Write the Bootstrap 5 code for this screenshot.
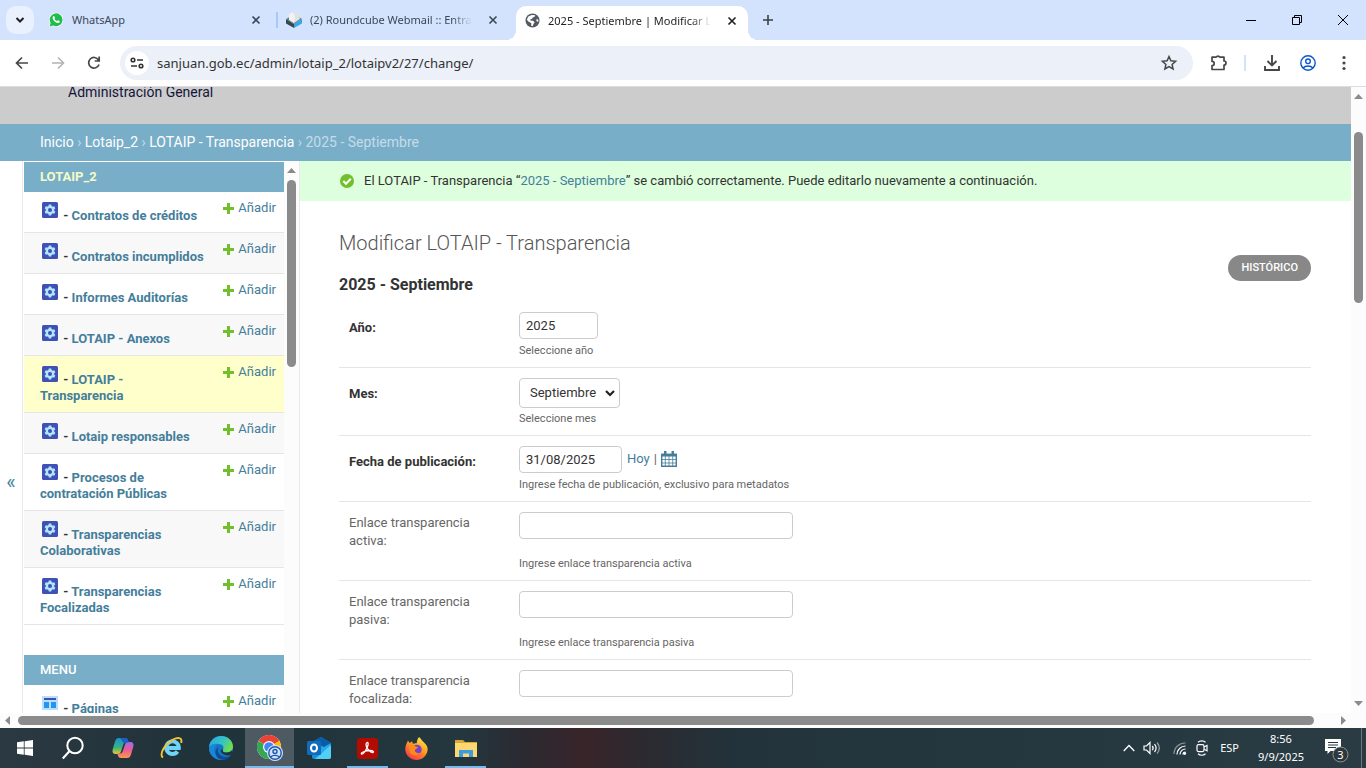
<!DOCTYPE html>
<html lang="es">
<head>
<meta charset="utf-8">
<meta name="viewport" content="width=device-width, initial-scale=1">
<title>2025 - Septiembre | Modificar LOTAIP</title>
<link href="https://cdn.jsdelivr.net/npm/bootstrap@5.3.0/dist/css/bootstrap.min.css" rel="stylesheet">
<style>
:root { --blue: #79aec8; --linkc: #447e9b; --thumb: #8b8b8b; --ui: "Noto Sans", "Open Sans", sans-serif; }
body { font-family: Roboto, "Liberation Sans", sans-serif; font-size: 13px; line-height: 16px; color: #333; background: #fff; }
svg { display: block; flex: none; }
button { border: 0; background: none; padding: 0; color: inherit; }
a { color: var(--linkc); text-decoration: none; }

/* browser tabs */
.tabstrip { height: 40px; padding: 6px 0 0 6px; background: #d3e3fd; font-family: var(--ui); font-size: 11px; line-height: 20px; color: #3c4756; }
.tab-search { width: 28px; height: 28px; border-radius: 10px; background: #e9f0fe; }
.tab-item { height: 28px; }
.tab-one { width: 242px; padding: 0 15px 0 14px; }
.tab-two { width: 230px; padding: 0 8px 0 10px; }
.tab-sep { width: 2px; height: 16px; margin: 6px -2px 0 0; background: #a8c7fa; }
.tab-title { overflow: hidden; white-space: nowrap; margin-left: 8px; }
.tab-fade { -webkit-mask-image: linear-gradient(90deg, #000 calc(100% - 20px), transparent); mask-image: linear-gradient(90deg, #000 calc(100% - 20px), transparent); }
.tab-active { position: relative; width: 232px; height: 34px; padding: 0 11px 5px 9px; background: #fff; border-radius: 10px 10px 0 0; color: #1f1f1f; margin-left: 10px; }
.tab-active::before, .tab-active::after { content: ""; position: absolute; bottom: 0; width: 10px; height: 10px; }
.tab-active::before { left: -10px; background: radial-gradient(circle at 0 0, transparent 10px, #fff 10px); }
.tab-active::after { right: -10px; background: radial-gradient(circle at 100% 0, transparent 10px, #fff 10px); }
.tab-new { margin: 8px 0 0 14px; }
.win-btn { width: 46px; height: 28px; color: #000; }

/* address bar */
.addressbar { height: 47px; padding: 0 13px 0 13px; background: #fff; border-bottom: 1px solid #ddd; color: #474747; }
.nav-btn { width: 18px; height: 18px; margin-right: 18px; }
.url-pill { height: 34px; border-radius: 17px; background: #ebf0f9; padding: 0 15px 0 5px; margin-left: -1px; }
.site-info { width: 24px; height: 24px; border-radius: 50%; background: #fff; color: #333; }
.url-text { border: 0; background: none; padding: 0; margin-left: 8px; height: 26px; line-height: 24px; font-family: var(--ui); font-size: 13px; color: #333; min-width: 0; outline: 0; }
.tool-set { margin-left: 17px; }
.tool-sep { margin: 0 17px 0 16px; }
.tool-user { margin: 0 19px; }

/* scrollbars */
.scroll-v { width: 15px; background: #fcfcfc; padding: 7px 0; }
.scroll-h { height: 15px; background: #fcfcfc; padding: 0 20px 0 5px; }
.thumb { background: var(--thumb); border-radius: 5px; flex: none; }
.thumb-page { width: 9px; height: 171px; margin-top: 33px; }
.thumb-side { width: 9px; height: 187px; margin-top: 7px; }
.thumb-h { height: 9px; margin: 0 27px 0 8px; }

/* site header */
.brand-bar { height: 37px; background: #ccc; padding: 0 40px 0 68px; color: #14143c; font-size: 14px; line-height: 10px; overflow: hidden; }
.crumbs { height: 37px; background: var(--blue); padding: 0 40px 2px; font-size: 14px; color: #c4dce8; }
.crumbs a { color: #fff; }

/* sidebar */
.side-toggle { width: 23px; border-right: 1px solid #eaeaea; color: var(--linkc); font-size: 20px; padding-top: 90px; }
.side-list { width: 261px; padding: 1px 0 0 1px; }
.side-table { margin: 0 0 30px; --bs-table-bg: transparent; }
.side-table caption { caption-side: top; background: var(--blue); padding: 7px 16px; font-size: 13px; line-height: 16px; font-weight: 500; color: #fff; }
.side-table .cap-current { font-weight: 700; color: #f5fbc8; }
.side-table th, .side-table td { padding: 8px; border-bottom: 1px solid #e5e5e5; line-height: 16px; vertical-align: top; color: #333; font-weight: 700; }
.side-table th { padding-left: 16px; }
.side-table td { width: 69px; font-weight: 400; white-space: nowrap; }
.side-table tr:nth-child(even) { background: #f8f8f8; }
.side-table tr.row-current { background: #ffc; }
.side-table th svg { display: inline-block; vertical-align: baseline; }
.side-edge { border-right: 1px solid #eaeaea; }

/* content */
.msg { min-height: 40px; background: #dfd; padding: 0 40px; }
.msg-text { padding-left: 10px; }
.content-pad { padding: 30px 40px 0 39px; }
.page-title { font-size: 20px; line-height: 24px; font-weight: 300; color: #555; margin: 0 0 21px; }
.object-title { font-size: 16px; line-height: 18px; font-weight: 700; margin: 0 0 8px; }
.pill-btn { font-size: 11px; line-height: 26px; font-weight: 500; padding: 0 13px; border-radius: 15px; background: #888; color: #fff; text-transform: uppercase; margin-top: 24px; }
.form-line { padding: 10px; border-bottom: 1px solid #e5e5e5; }
.form-line label { width: 170px; padding: 2px 30px 0 0; line-height: 18px; color: #666; }
.form-line label.required { font-weight: 700; color: #333; padding-top: 7px; }
.form-line .form-control { border: 1px solid #ccc; border-radius: 4px; font-size: 13px; line-height: 15px; color: #333; padding: 5px 6px; height: 27px; margin-bottom: 1px; }
.form-line .form-select { border: 1px solid #ccc; border-radius: 4px; font-size: 13px; line-height: 18px; color: #333; width: 101px; height: 30px; padding: 5px 20px 5px 10px; background-position: right 3px center; background-size: 12px;
  background-image: url("data:image/svg+xml,%3Csvg xmlns='http://www.w3.org/2000/svg' viewBox='0 0 12 12'%3E%3Cpath d='M2 4l4 4 4-4' fill='none' stroke='%23222' stroke-width='2.2'/%3E%3C/svg%3E"); }
.form-line .in-year { width: 79px; }
.form-line .in-date { width: 103px; }
.form-line .in-url { width: 274px; margin-bottom: 14px; }
.date-links { padding: 0 0 3px 5px; color: #666; }
.help-note { font-size: 11px; line-height: 13px; padding-top: 4px; color: #666; }

/* taskbar */
.taskbar { height: 40px; background: linear-gradient(90deg, #2b3942 0, #20323a 14%, #24363e 34%, #2b2b32 38%, #382429 43%, #2c2a30 47%, #22333b 54%, #253840 80%, #2a3b43 100%); color: #fff; font-family: var(--ui); font-size: 11px; }
.task-btn { width: 49px; height: 40px; }
.task-on { border-bottom: 2px solid #76b9ed; padding-top: 2px; margin: 0 4px; width: 41px; }
.task-focus { background: #4d5a61; margin: 0; width: 49px; }
.tray-cam { margin: 0 11px 0 8px; }
.tray-clock { width: 68px; text-align: center; line-height: 18px; }
.show-desktop { width: 5px; height: 40px; border-left: 1px solid #6b777d; }
</style>
</head>
<body>
<svg width="0" height="0" class="position-absolute" aria-hidden="true">
  <symbol id="x" viewBox="0 0 10 10"><path d="M1.5 1.5l7 7M8.500 1.500l-7 7" stroke="currentColor" stroke-width="1.6"/></symbol>
  <symbol id="gear" viewBox="0 0 20 20">
    <rect x="2" y="2" width="16" height="16" rx="1.500" fill="#3f51b5"/>
    <g fill="#b3e5fc"><circle cx="10" cy="10" r="4.200"/>
    <path d="M8.800 4.500h2.400l.4 2H8.400zM8.800 15.500h2.400l.4-2H8.400z"/>
    <path d="M8.800 4.500h2.400l.4 2H8.400zM8.800 15.500h2.400l.4-2H8.400z" transform="rotate(60 10 10)"/>
    <path d="M8.800 4.500h2.400l.4 2H8.400zM8.800 15.500h2.400l.4-2H8.400z" transform="rotate(120 10 10)"/></g>
    <circle cx="10" cy="10" r="2" fill="#3f51b5"/>
  </symbol>
  <symbol id="plus" viewBox="0 0 11 11"><path d="M5.500 0v11M0 5.500h11" stroke="#70bf2b" stroke-width="3"/></symbol>
  <symbol id="up" viewBox="0 0 9 5"><path d="M0 5L4.500 0 9 5z" fill="#8b8b8b"/></symbol>
</svg>

<div class="d-flex flex-column vh-100 overflow-hidden">

  <header class="flex-shrink-0">
    <div class="tabstrip d-flex align-items-start">
      <button class="tab-search d-flex align-items-center justify-content-center" aria-label="Buscar pestañas"><svg width="10" height="10" viewBox="0 0 10 10"><path d="M1.500 3L5 6.500 8.500 3" fill="none" stroke="#1f1f1f" stroke-width="2"/></svg></button>
      <div class="tab-item tab-one d-flex align-items-center">
        <svg width="16" height="16" viewBox="0 0 16 16"><path d="M1 15l1-3.800A7 7 0 1 1 4.800 14z" fill="#fff"/><path d="M1.700 14.400l.9-3.400a6.400 6.400 0 1 1 2.500 2.400z" fill="#1fbd4b"/><path d="M5.300 4.300c.6-.5 1-.3 1.200.2l.5 1.200c.1.400-.5.900-.5 1.200.5 1 1.300 1.700 2.400 2.200.4 0 .8-1 1.200-.9l1.500.8c.4.300 0 1.500-.7 1.800-1.600.8-4.800-1.200-5.900-3.400-.6-1.200-.4-2.500.3-3.100z" fill="#fff"/></svg>
        <span class="tab-title flex-grow-1">WhatsApp</span>
        <button aria-label="Cerrar"><svg width="10" height="10"><use href="#x"/></svg></button>
      </div>
      <div class="tab-sep"></div>
      <div class="tab-item tab-two d-flex align-items-center">
        <svg width="16" height="16" viewBox="0 0 16 16"><path d="M0 7l8 5v4L0 11.500z" fill="#37474f"/><path d="M16 7l-8 5v4l8-4.500z" fill="#35a8e8"/><path d="M0 7l8-4.500L16 7l-8 5z" fill="#607d8b"/><path d="M3 2.500L7 0l5 1.500 2 5.500-6 4-5-3.200z" fill="#dfe3e5"/><path d="M3 2.500L7 0l2 5-1 6-5-3.200z" fill="#f2f2ee"/></svg>
        <span class="tab-title tab-fade flex-grow-1">(2) Roundcube Webmail :: Entrada</span>
        <button class="ms-3" aria-label="Cerrar"><svg width="10" height="10"><use href="#x"/></svg></button>
      </div>
      <div class="tab-active d-flex align-items-center">
        <svg width="15" height="15" viewBox="0 0 16 16"><circle cx="8" cy="8" r="7.500" fill="#555a60"/><path d="M7 2.200l4 .2-1 1.800-2 .6-.4 1.600H6L5.500 8l3 .3 1.800 1.500-1.200 1.700-1 2.500-1.600-.8.3-2.300L3.600 9 2 7.200 3.300 4zM12.500 6l1.800 1.500-.3 2-1.900-1z" fill="#fff"/></svg>
        <span class="tab-title tab-fade flex-grow-1">2025 - Septiembre | Modificar LOTAIP</span>
        <button class="ms-3" aria-label="Cerrar"><svg width="10" height="10"><use href="#x"/></svg></button>
      </div>
      <button class="tab-new" aria-label="Nueva pestaña"><svg width="12" height="12" viewBox="0 0 12 12"><path d="M6 1v10M1 6h10" stroke="#3c4043" stroke-width="1.600"/></svg></button>
      <div class="d-flex ms-auto">
        <button class="win-btn d-flex align-items-center justify-content-center" aria-label="Minimizar"><svg width="10" height="10"><path d="M0 5.500h10" stroke="#000"/></svg></button>
        <button class="win-btn d-flex align-items-center justify-content-center" aria-label="Restaurar"><svg width="10" height="10"><path d="M.5 2.500h7v7h-7zM2.500 2.500v-2h7v7h-2" fill="none" stroke="#000"/></svg></button>
        <button class="win-btn d-flex align-items-center justify-content-center" aria-label="Cerrar ventana"><svg width="10" height="10"><path d="M0 0l10 10M10 0L0 10" stroke="#000"/></svg></button>
      </div>
    </div>

    <div class="addressbar d-flex align-items-center">
      <button class="nav-btn" aria-label="Atrás"><svg width="18" height="18" viewBox="0 0 18 18"><path d="M15 9H4M9 3.500L3.500 9 9 14.500" fill="none" stroke="#474747" stroke-width="1.700"/></svg></button>
      <button class="nav-btn" aria-label="Adelante"><svg width="18" height="18" viewBox="0 0 18 18"><path d="M3 9h11M9 3.500l5.500 5.500L9 14.500" fill="none" stroke="#b4b4b4" stroke-width="1.600"/></svg></button>
      <button class="nav-btn" aria-label="Recargar"><svg width="18" height="18" viewBox="0 0 18 18"><path d="M14 10.500A5.300 5.300 0 1 1 13.500 6M14.200 2.500V7H9.700" fill="none" stroke="#474747" stroke-width="1.700"/></svg></button>
      <div class="url-pill d-flex align-items-center flex-grow-1">
        <button class="site-info d-flex align-items-center justify-content-center" aria-label="Información del sitio"><svg width="14" height="12" viewBox="0 0 14 12"><g fill="none" stroke="#333" stroke-width="1.600"><circle cx="3" cy="3" r="1.800"/><path d="M7 3h6M1 9h6"/><circle cx="11" cy="9" r="1.800"/></g></svg></button>
        <input class="url-text flex-grow-1" aria-label="Dirección" value="sanjuan.gob.ec/admin/lotaip_2/lotaipv2/27/change/">
        <button aria-label="Marcador"><svg width="18" height="18" viewBox="0 0 18 18"><path d="M9 2.500l1.900 4.300 4.700.5-3.500 3.100 1 4.600L9 12.600 4.900 15l1-4.600-3.500-3.100 4.700-.5z" fill="none" stroke="#474747" stroke-width="1.500"/></svg></button>
      </div>
      <div class="tool-set d-flex align-items-center">
        <button aria-label="Extensiones"><svg width="18" height="18" viewBox="0 0 18 18"><path d="M2 3.200h4.200a2 2 0 0 1 3.600 0H14V7a2 2 0 0 1 0 4v4.500H2V11.700a2.200 2.200 0 0 0 0-4.400z" fill="none" stroke="#474747" stroke-width="1.700" stroke-linejoin="round"/></svg></button>
        <svg class="tool-sep" width="2" height="16"><path d="M1 0v16" stroke="#d3e3fd" stroke-width="2"/></svg>
        <button aria-label="Descargas"><svg width="18" height="18" viewBox="0 0 18 18"><path d="M9 1v10M4.500 7L9 11.500 13.500 7M2 12v4h14v-4" fill="none" stroke="#474747" stroke-width="1.900"/></svg></button>
        <button class="tool-user" aria-label="Perfil"><svg width="16" height="16" viewBox="0 0 16 16"><g fill="none" stroke="#0b57d0" stroke-width="1.400"><circle cx="8" cy="8" r="7.200"/><circle cx="8" cy="6.300" r="2.300"/><path d="M3 13c2.500-2.600 7.500-2.600 10 0"/></g></svg></button>
        <button aria-label="Menú"><svg width="18" height="18" viewBox="0 0 18 18"><g fill="#474747"><circle cx="9" cy="3.500" r="1.600"/><circle cx="9" cy="9" r="1.600"/><circle cx="9" cy="14.500" r="1.600"/></g></svg></button>
      </div>
    </div>
  </header>

  <div class="d-flex flex-grow-1 overflow-hidden">
    <div class="d-flex flex-column flex-grow-1 overflow-hidden">
      <div class="brand-bar flex-shrink-0">Administración General</div>
      <nav class="crumbs d-flex align-items-center flex-shrink-0" aria-label="Ruta">
        <div><a href="#">Inicio</a> › <a href="#">Lotaip_2</a> › <a href="#">LOTAIP - Transparencia</a> › 2025 - Septiembre</div>
      </nav>

      <div class="d-flex flex-grow-1 overflow-hidden">
        <button class="side-toggle d-flex align-items-center justify-content-center flex-shrink-0" aria-label="Alternar navegación">«</button>
        <nav class="side-list flex-shrink-0 overflow-hidden" aria-label="Barra lateral">
          <table class="table side-table">
            <caption class="cap-current">LOTAIP_2</caption>
            <tbody>
            <tr><th scope="row"><svg width="20" height="20"><use href="#gear"/></svg> - <a href="#">Contratos de créditos</a></th><td><a href="#" class="d-flex align-items-center justify-content-between"><svg width="11" height="11"><use href="#plus"/></svg>Añadir</a></td></tr>
            <tr><th scope="row"><svg width="20" height="20"><use href="#gear"/></svg> - <a href="#">Contratos incumplidos</a></th><td><a href="#" class="d-flex align-items-center justify-content-between"><svg width="11" height="11"><use href="#plus"/></svg>Añadir</a></td></tr>
            <tr><th scope="row"><svg width="20" height="20"><use href="#gear"/></svg> - <a href="#">Informes Auditorías</a></th><td><a href="#" class="d-flex align-items-center justify-content-between"><svg width="11" height="11"><use href="#plus"/></svg>Añadir</a></td></tr>
            <tr><th scope="row"><svg width="20" height="20"><use href="#gear"/></svg> - <a href="#">LOTAIP - Anexos</a></th><td><a href="#" class="d-flex align-items-center justify-content-between"><svg width="11" height="11"><use href="#plus"/></svg>Añadir</a></td></tr>
            <tr class="row-current"><th scope="row"><svg width="20" height="20"><use href="#gear"/></svg> - <a href="#">LOTAIP - Transparencia</a></th><td><a href="#" class="d-flex align-items-center justify-content-between"><svg width="11" height="11"><use href="#plus"/></svg>Añadir</a></td></tr>
            <tr><th scope="row"><svg width="20" height="20"><use href="#gear"/></svg> - <a href="#">Lotaip responsables</a></th><td><a href="#" class="d-flex align-items-center justify-content-between"><svg width="11" height="11"><use href="#plus"/></svg>Añadir</a></td></tr>
            <tr><th scope="row"><svg width="20" height="20"><use href="#gear"/></svg> - <a href="#">Procesos de contratación Públicas</a></th><td><a href="#" class="d-flex align-items-center justify-content-between"><svg width="11" height="11"><use href="#plus"/></svg>Añadir</a></td></tr>
            <tr><th scope="row"><svg width="20" height="20"><use href="#gear"/></svg> - <a href="#">Transparencias Colaborativas</a></th><td><a href="#" class="d-flex align-items-center justify-content-between"><svg width="11" height="11"><use href="#plus"/></svg>Añadir</a></td></tr>
            <tr><th scope="row"><svg width="20" height="20"><use href="#gear"/></svg> - <a href="#">Transparencias Focalizadas</a></th><td><a href="#" class="d-flex align-items-center justify-content-between"><svg width="11" height="11"><use href="#plus"/></svg>Añadir</a></td></tr>
            </tbody>
          </table>
          <table class="table side-table">
            <caption>MENU</caption>
            <tbody>
            <tr><th scope="row"><svg width="20" height="20" viewBox="0 0 20 20"><path d="M2 3h16v14H2z" fill="#bbdefb"/><path d="M4 5h12v2H4z" fill="#3f51b5"/><path d="M4 9h5v6H4zM11 9h5v6h-5z" fill="#2196f3"/></svg> - <a href="#">Páginas</a></th><td><a href="#" class="d-flex align-items-center justify-content-between"><svg width="11" height="11"><use href="#plus"/></svg>Añadir</a></td></tr>
            </tbody>
          </table>
        </nav>
        <div class="side-edge d-flex flex-shrink-0">
          <div class="scroll-v d-flex flex-column align-items-center">
            <svg width="9" height="5"><use href="#up"/></svg>
            <div class="thumb thumb-side"></div>
          </div>
        </div>

        <main class="flex-grow-1 overflow-hidden">
          <div class="msg d-flex align-items-center">
            <svg width="14" height="14" viewBox="0 0 14 14"><circle cx="7" cy="7" r="7" fill="#70bf2b"/><path d="M3.300 7l2.700 2.800 4.800-5" fill="none" stroke="#fff" stroke-width="2"/></svg>
            <span class="msg-text">El LOTAIP - Transparencia “<a href="#">2025 - Septiembre</a>” se cambió correctamente. Puede editarlo nuevamente a continuación.</span>
          </div>
          <div class="content-pad">
            <div class="d-flex justify-content-between align-items-start">
              <div>
                <h1 class="page-title">Modificar LOTAIP - Transparencia</h1>
                <h2 class="object-title">2025 - Septiembre</h2>
              </div>
              <a href="#" class="pill-btn">Histórico</a>
            </div>
            <form>
              <div class="form-line d-flex">
                <label for="f-year" class="required">Año:</label>
                <div>
                  <input id="f-year" class="form-control in-year" value="2025">
                  <div class="help-note">Seleccione año</div>
                </div>
              </div>
              <div class="form-line d-flex">
                <label for="f-month" class="required">Mes:</label>
                <div>
                  <select id="f-month" class="form-select"><option>Septiembre</option></select>
                  <div class="help-note">Seleccione mes</div>
                </div>
              </div>
              <div class="form-line d-flex">
                <label for="f-date" class="required">Fecha de publicación:</label>
                <div>
                  <div class="d-flex align-items-center">
                    <input id="f-date" class="form-control in-date" value="31/08/2025">
                    <span class="date-links d-flex align-items-center gap-1"><a href="#">Hoy</a><span>|</span>
                    <a href="#" aria-label="Calendario"><svg width="16" height="16" viewBox="0 0 16 16"><path d="M.7 3.500h14.600v11.800H.7z" fill="#fff" stroke="#447e9b" stroke-width="1.400"/><path d="M0 2.800h16v2.700H0zM3 0h2.500v4H3zM10.500 0H13v4h-2.500z" fill="#447e9b"/><path d="M4.300 5v10M8 5v10M11.700 5v10M1 8.500h14M1 12h14" stroke="#447e9b" stroke-width=".8"/></svg></a></span>
                  </div>
                  <div class="help-note">Ingrese fecha de publicación, exclusivo para metadatos</div>
                </div>
              </div>
              <div class="form-line d-flex">
                <label for="f-act">Enlace transparencia activa:</label>
                <div>
                  <input id="f-act" type="url" class="form-control in-url">
                  <div class="help-note">Ingrese enlace transparencia activa</div>
                </div>
              </div>
              <div class="form-line d-flex">
                <label for="f-pas">Enlace transparencia pasiva:</label>
                <div>
                  <input id="f-pas" type="url" class="form-control in-url">
                  <div class="help-note">Ingrese enlace transparencia pasiva</div>
                </div>
              </div>
              <div class="form-line d-flex">
                <label for="f-foc">Enlace transparencia focalizada:</label>
                <div><input id="f-foc" type="url" class="form-control in-url"></div>
              </div>
            </form>
          </div>
        </main>
      </div>
    </div>
    <div class="scroll-v d-flex flex-column align-items-center flex-shrink-0">
      <svg width="9" height="5"><use href="#up"/></svg>
      <div class="thumb thumb-page"></div>
      <svg class="mt-auto" width="9" height="5"><path d="M0 0h9L4.500 5z" fill="#8b8b8b"/></svg>
    </div>
  </div>

  <div class="scroll-h d-flex align-items-center flex-shrink-0">
    <svg width="5" height="9"><path d="M5 0v9L0 4.500z" fill="#8b8b8b"/></svg>
    <div class="thumb thumb-h flex-grow-1 flex-shrink-1"></div>
    <svg width="5" height="9"><path d="M0 0v9l5-4.500z" fill="#8b8b8b"/></svg>
  </div>

  <footer class="taskbar d-flex align-items-center flex-shrink-0">
    <button class="task-btn d-flex align-items-center justify-content-center" aria-label="Inicio"><svg width="16" height="16" viewBox="0 0 16 16"><path d="M0 2.300l6.800-1v6.300H0zM7.600 1.200L16 0v7.600H7.600zM0 8.400h6.800v6.300L0 13.700zM7.600 8.400H16V16l-8.400-1.200z" fill="#fff"/></svg></button>
    <button class="task-btn d-flex align-items-center justify-content-center" aria-label="Buscar"><svg width="24" height="24" viewBox="0 0 24 24"><circle cx="13" cy="9.500" r="7.700" fill="none" stroke="#fff" stroke-width="2"/><path d="M7.600 15L.8 22.500" stroke="#fff" stroke-width="2.200"/></svg></button>
    <button class="task-btn d-flex align-items-center justify-content-center" aria-label="Copilot"><svg width="22" height="22" viewBox="0 0 22 22"><defs><linearGradient id="cp1" x2="0" y2="1"><stop stop-color="#1594d8"/><stop offset=".6" stop-color="#39b47a"/><stop offset="1" stop-color="#e6c933"/></linearGradient><linearGradient id="cp2" x2="0" y2="1"><stop stop-color="#9c6cf0"/><stop offset=".5" stop-color="#ef5a94"/><stop offset="1" stop-color="#f99a4a"/></linearGradient></defs><path d="M13 1c2 0 2.700 1.200 3.200 3l.5 1.500h-2.500c-2 0-2.600 1-3.200 3L9 14.500c-.6 1.700-1.600 2.500-3.500 2.500H3.600C.8 17 0 14.800.8 12L3 4.500C3.700 2 5 1 7 1z" fill="url(#cp1)"/><path d="M9 21c-2 0-2.700-1.200-3.200-3L5.300 16.500h2.500c2 0 2.600-1 3.200-3L13 7.500C13.600 5.800 14.600 5 16.500 5h1.900C21.200 5 22 7.200 21.200 10L19 17.500C18.300 20 17 21 15 21z" fill="url(#cp2)"/><path d="M8 1h5c2 0 2.700 1.200 3.200 3l.5 1.500h-2.500c-1 0-1.700.3-2.200 1z" fill="#1d5fc4"/></svg></button>
    <button class="task-btn d-flex align-items-center justify-content-center" aria-label="Internet Explorer"><svg width="24" height="24" viewBox="0 0 24 24"><path d="M17.500 15.500A6.300 6.300 0 1 1 18.800 12H7" fill="none" stroke="#6fd3f7" stroke-width="4"/><path d="M3 21.500C-1.500 19 5 7.500 13 3.500c6-3 9.500-1.500 8.200 3.500" fill="none" stroke="#f5c431" stroke-width="1.900"/></svg></button>
    <button class="task-btn d-flex align-items-center justify-content-center" aria-label="Edge"><svg width="24" height="24" viewBox="0 0 24 24"><defs><linearGradient id="ed" x2="1" y2=".4"><stop stop-color="#2aa8e0"/><stop offset=".6" stop-color="#35c1c8"/><stop offset="1" stop-color="#6bdc54"/></linearGradient></defs><circle cx="12" cy="12" r="12" fill="#1276c8"/><path d="M0 11C.8 4.500 6 0 12 0c7 0 12 5 12 10.500 0 4-3 6-6.500 6-3 0-4.500-1.500-3.500-2.800C15.500 11 13.500 8 9.500 8 5 8 1 9.500 0 11z" fill="url(#ed)"/><path d="M9.500 8C5.500 9 4 13.500 6 17.500c2 3.500 6 6 9 6C9 25 1 21 0 13c0-4 5-6 9.500-5z" fill="#1b87d8"/><path d="M10 10.500c-2.500 3-1.500 8 4 10 3 1 6 .4 8.200-1.800-2 4-7 6-11.200 4.500-5-2-6.500-9.500-1-12.700z" fill="#0e4d92"/><path d="M14 13.700c-1 1.300.5 2.800 3.500 2.800 2 0 4-.7 5.300-2 1 1.500.6 3.500-.6 4.200-3 1.600-8.200.3-10.200-2.700-.6-2 .5-3.300 2-2.300z" fill="#22343c"/></svg></button>
    <button class="task-btn task-on task-focus d-flex align-items-center justify-content-center" aria-label="Chrome"><svg width="26" height="26" viewBox="0 0 26 26"><circle cx="12" cy="12" r="12" fill="#fff"/><path d="M12 12L1.600 6A12 12 0 0 1 22.400 6z" fill="#ea4335"/><path d="M12 12L22.400 6A12 12 0 0 1 12 24z" fill="#fbbc05"/><path d="M12 12v12A12 12 0 0 1 1.600 6z" fill="#34a853"/><circle cx="12" cy="12" r="6" fill="#fff"/><circle cx="12" cy="12" r="4.800" fill="#4285f4"/><circle cx="18" cy="18" r="8" fill="#d3e3fd"/><g fill="none" stroke="#1c55ad" stroke-width="1.400"><circle cx="18" cy="18" r="6.200"/><circle cx="18" cy="16.500" r="2"/><path d="M13.700 22c2-2.200 6.600-2.200 8.600 0"/></g></svg></button>
    <button class="task-btn d-flex align-items-center justify-content-center" aria-label="Outlook"><svg width="24" height="22" viewBox="0 0 24 22"><path d="M5 5L14 0l10 6v14a2 2 0 0 1-2 2H7a2 2 0 0 1-2-2z" fill="#1490df"/><path d="M8 3h10l5 4v5l-9 4-6-5z" fill="#28a8ea"/><path d="M5 5L14 0l10 6-7 4z" fill="#0a5ba8"/><path d="M24 8v12a2 2 0 0 1-2 2H8z" fill="#50d0f4"/><rect y="4" width="14" height="14" rx="1.500" fill="#0f6cbd"/><ellipse cx="7" cy="11" rx="3" ry="3.500" fill="none" stroke="#fff" stroke-width="2"/></svg></button>
    <button class="task-btn task-on d-flex align-items-center justify-content-center" aria-label="Acrobat"><svg width="21" height="21" viewBox="0 0 21 21"><rect width="21" height="21" rx="3" fill="#b30b00"/><path d="M10 4.500c2-.3 1.300 4-1.500 8-2 3.500-4 4.300-4.200 3.200-.3-1.500 5-3.300 8.700-3.200 3.500.1 4.300 1.700 2.800 2-2.300.4-6.600-4.300-6.800-7.500 0-1.300.3-2.300 1-2.500z" fill="none" stroke="#fff" stroke-width="1.300"/></svg></button>
    <button class="task-btn d-flex align-items-center justify-content-center" aria-label="Firefox"><svg width="23" height="23" viewBox="0 0 23 23"><defs><linearGradient id="ff" x1=".8" y1="0" x2=".2" y2="1"><stop stop-color="#fff14a"/><stop offset=".45" stop-color="#ff9a1f"/><stop offset="1" stop-color="#f5304f"/></linearGradient></defs><path d="M14 0c2.500 2 3 4 5 5.500C21.500 8 23 10 22.600 13 22 19 17 23 11.500 23S.5 18.500.3 12.500C.2 9 1.500 6.500 3 3.500L4.500 6l2.700-1.700.5 2.500c1.500-.7 3-.8 4-.5C11.800 4 12.500 2 14 0z" fill="url(#ff)"/><circle cx="12" cy="12.500" r="4.700" fill="#7542c8"/><path d="M4.500 9c2-1.500 4-1 5.500 0 1 .8 2.500.5 3 1.200-.5 1.300-2.500 1.300-3 2.800-.5 2 2 3.500 4.500 2.700-2.500 3.500-8 3-9.700-.7z" fill="#ff8a1c"/></svg></button>
    <button class="task-btn task-on d-flex align-items-center justify-content-center" aria-label="Explorador de archivos"><svg width="22" height="19" viewBox="0 0 22 19"><path d="M0 1h8l2 2h12v3H0z" fill="#dca53a"/><path d="M0 4h22v14H0z" fill="#fbd872"/><path d="M4 18v-7h14v7h-4v-3.500H8V18z" fill="#3d9be0"/></svg></button>

    <div class="d-flex align-items-center ms-auto">
      <svg width="12" height="8" viewBox="0 0 12 8"><path d="M.7 7L6 1.500 11.300 7" fill="none" stroke="#fff" stroke-width="1.300"/></svg>
      <svg class="mx-2" width="18" height="14" viewBox="0 0 18 14"><g fill="none" stroke="#fff" stroke-width="1.200"><path d="M1 5v4h2.500L7 12.500v-11L3.500 5zM9.300 5c1 1.200 1 3 0 4.200M11.500 3.200c2 2.400 2 5.400 0 7.800"/><path d="M14 1.500c2.800 3.400 2.800 7.800 0 11.200" stroke="#98a2a7"/></g></svg>
      <svg class="ms-1" width="14" height="13" viewBox="0 0 14 13"><g fill="none" stroke-width="1.200"><path d="M1 12A11 11 0 0 1 12.500 1" stroke="#89959a"/><path d="M4 12.500A8.500 8.500 0 0 1 12.500 4M7 12.500A5.500 5.500 0 0 1 12.500 7M10 12.500a2.500 2.500 0 0 1 2.500-2.500" stroke="#fff"/></g><circle cx="11.700" cy="11.500" r="1.400" fill="#fff"/></svg>
      <svg class="tray-cam" width="14" height="16" viewBox="0 0 14 16"><g fill="none" stroke="#fff" stroke-width="1.200"><rect x="2" y="4.600" width="7" height="7" rx="1.500"/><path d="M9 7l3-1.500v5.200L9 9.200M3 2.300C5 .4 8.500.4 10.500 2.300M3 13.800c2 1.900 5.500 1.900 7.500 0"/></g></svg>
      <span>ESP</span>
      <div class="tray-clock ms-2">8:56<br>9/9/2025</div>
      <button class="ms-2 me-2 pe-1 pt-1" aria-label="Notificaciones"><svg width="26" height="26" viewBox="0 0 26 26"><path d="M2 2h16v12H7.500L4.500 17v-3H2z" fill="#fff"/><path d="M5 5.500h10M5 8h10M5 10.500h8" stroke="#26373f"/><circle cx="17.500" cy="17.500" r="7.500" fill="#30373b" stroke="#8c9599"/><text x="17.500" y="21.500" text-anchor="middle" font-size="11" fill="#fff">3</text></svg></button>
      <div class="show-desktop"></div>
    </div>
  </footer>
</div>
<script src="https://cdn.jsdelivr.net/npm/bootstrap@5.3.0/dist/js/bootstrap.bundle.min.js"></script>
</body>
</html>
